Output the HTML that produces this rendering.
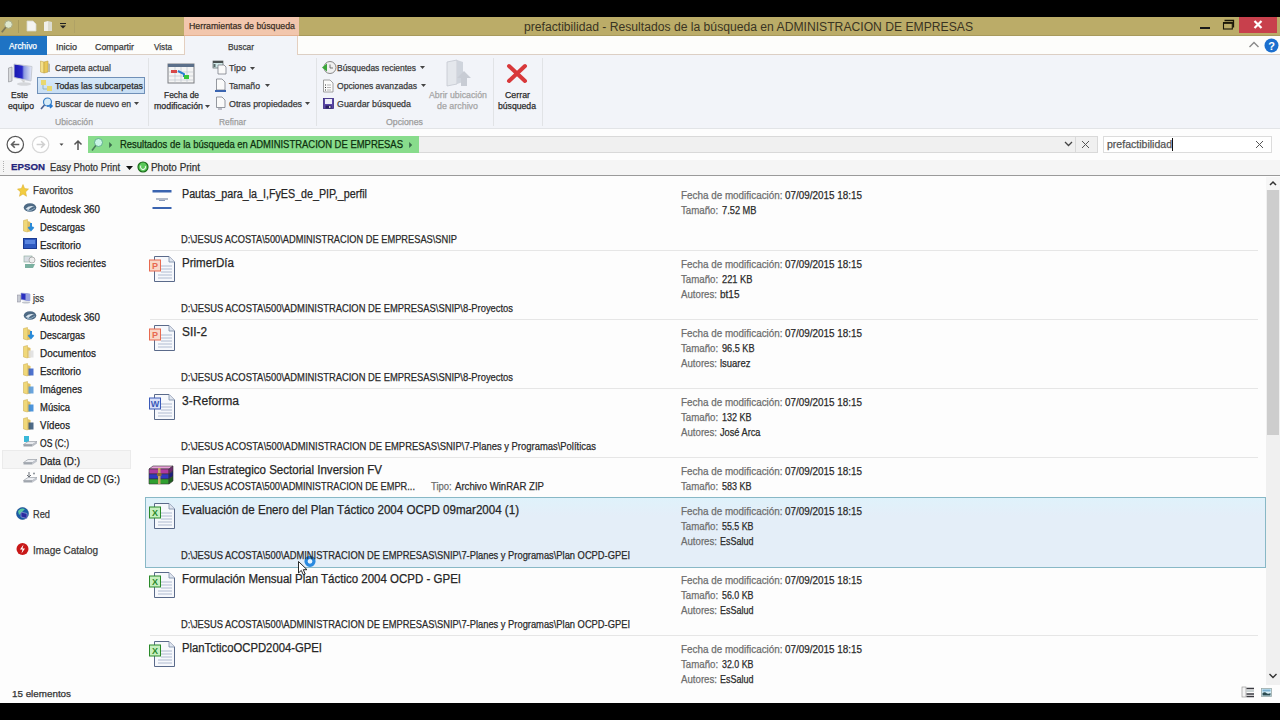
<!DOCTYPE html><html><head><meta charset="utf-8"><style>html,body{margin:0;padding:0;}body{width:1280px;height:720px;overflow:hidden;position:relative;background:#000;font-family:"Liberation Sans",sans-serif;}.t{position:absolute;white-space:nowrap;line-height:1;transform-origin:0 0;-webkit-text-stroke:0.25px currentColor;}svg{overflow:visible}</style></head><body><div style="position:absolute;left:0px;top:0px;width:1280px;height:17px;background:#000"></div><div style="position:absolute;left:0px;top:703px;width:1280px;height:17px;background:#000"></div><div style="position:absolute;left:0px;top:17px;width:1280px;height:19px;background:#bbac68"></div><div style="position:absolute;left:0px;top:35px;width:1280px;height:1px;background:#a89a5c"></div><div style="position:absolute;left:184px;top:17px;width:115px;height:19px;background:#f2c6ad"></div><div style="position:absolute;left:184px;top:35px;width:115px;height:1px;background:#e4b090"></div><div style="position:absolute;left:1200px;top:27px;width:10px;height:2px;background:#1a1a1a"></div><svg style="position:absolute;left:1222px;top:19px" width="13" height="12" viewBox="0 0 13 12"><path d="M2.5 1.5 H11.5 V8.5" fill="none" stroke="#1a1608" stroke-width="1.3"/><rect x="1.5" y="3.8" width="8.8" height="6.2" fill="none" stroke="#1a1608" stroke-width="1.1"/><rect x="1" y="3" width="9.8" height="1.8" fill="#1a1608"/></svg><div style="position:absolute;left:1239px;top:17px;width:38px;height:16px;background:#c8404c"></div><svg style="position:absolute;left:1251px;top:19px" width="14" height="11" viewBox="0 0 14 11"><path d="M3.5 2 L10.5 9 M10.5 2 L3.5 9" stroke="#fff" stroke-width="2.2"/></svg><svg style="position:absolute;left:0px;top:19px" width="17" height="16" viewBox="0 0 17 16"><circle cx="8.5" cy="5.5" r="3.8" fill="#dfe8cc" stroke="#a8ac88" stroke-width="1"/><path d="M5.8 8.3 L1.8 13.2" stroke="#7a7658" stroke-width="1.8"/></svg><div style="position:absolute;left:18px;top:20px;width:1px;height:13px;background:#a89a5c"></div><svg style="position:absolute;left:26px;top:20px" width="12" height="12" viewBox="0 0 12 12"><path d="M1 1 H7 L10 4 V11 H1 Z" fill="#f4f4f0" stroke="#d8d8cc" stroke-width="0.8"/></svg><svg style="position:absolute;left:43px;top:20px" width="11" height="12" viewBox="0 0 11 12"><path d="M1 2 L5 1 V11 L1 11 Z" fill="#f0f0ea"/><path d="M5 1 L9 2 V11 H5 Z" fill="#dcdcd0"/></svg><svg style="position:absolute;left:59px;top:23px" width="8" height="6" viewBox="0 0 8 6"><rect x="1" y="0" width="6" height="1" fill="#222"/><path d="M1 2.5 H7 L4 5.5 Z" fill="#222"/></svg><div style="position:absolute;left:74px;top:20px;width:1px;height:13px;background:#b0a266"></div><div style="position:absolute;left:0px;top:36px;width:1280px;height:19px;background:#fdfdfb"></div><div style="position:absolute;left:0px;top:54px;width:1280px;height:1px;background:#dccfc4"></div><div style="position:absolute;left:0px;top:36px;width:47px;height:19px;background:#1e73c4"></div><div style="position:absolute;left:184px;top:36px;width:114px;height:20px;background:#f2f4f9;border-left:1px solid #e4cfbf;border-right:1px solid #e4cfbf;box-sizing:border-box"></div><svg style="position:absolute;left:1248px;top:40px" width="12" height="9" viewBox="0 0 12 9"><path d="M1.5 7 L6 2.5 L10.5 7" fill="none" stroke="#8a8a8a" stroke-width="1.4"/></svg><svg style="position:absolute;left:1264px;top:38px" width="15" height="15" viewBox="0 0 15 15"><circle cx="7.5" cy="7.5" r="7" fill="#1c6fce"/><text x="7.5" y="12" font-family="Liberation Sans" font-weight="bold" font-size="11" fill="#fff" text-anchor="middle">?</text></svg><div style="position:absolute;left:0px;top:55px;width:1280px;height:74px;background:#f2f4f9"></div><div style="position:absolute;left:0px;top:128px;width:1280px;height:1px;background:#e2e4e7"></div><div style="position:absolute;left:148px;top:58px;width:1px;height:68px;background:#e1e3e6"></div><div style="position:absolute;left:316px;top:58px;width:1px;height:68px;background:#e1e3e6"></div><div style="position:absolute;left:493px;top:58px;width:1px;height:68px;background:#e1e3e6"></div><div style="position:absolute;left:542px;top:58px;width:1px;height:68px;background:#e1e3e6"></div><svg style="position:absolute;left:7px;top:62px" width="26" height="24" viewBox="0 0 26 24"><defs><linearGradient id="scr" x1="0" x2="1"><stop offset="0" stop-color="#1818b0"/><stop offset="0.45" stop-color="#2828c8"/><stop offset="0.55" stop-color="#8a98e0"/><stop offset="1" stop-color="#e8ecf8"/></linearGradient></defs><path d="M1.5 6 L5 5 V19 L1.5 20 Z" fill="#d8dadc" stroke="#8a8c90" stroke-width="0.6"/><path d="M7 2 L25 4.5 L24 19 L7 15.5 Z" fill="url(#scr)" stroke="#c8ccd4" stroke-width="1"/><path d="M14 18 L18 18.5 L17 21 Z" fill="#ccc"/><ellipse cx="17" cy="22" rx="7" ry="1.8" fill="#d4d6da"/></svg><svg style="position:absolute;left:39px;top:60px" width="14" height="14" viewBox="0 0 14 14"><path d="M1.5 1 L5 2 V13 L1.5 12 Z" fill="#f4e08a" stroke="#c8a848" stroke-width="0.6"/><path d="M5 2 L9 1 V12 L5 13 Z" fill="#e8c858" stroke="#c0a040" stroke-width="0.6"/><path d="M9 3 L11 4 V12 L9 12 Z" fill="#b8b8a8"/></svg><div style="position:absolute;left:37px;top:77px;width:108px;height:17px;background:linear-gradient(#d6e8f8,#c8def4);border:1px solid #7090b8;box-sizing:border-box"></div><svg style="position:absolute;left:40px;top:79px" width="14" height="14" viewBox="0 0 14 14"><rect x="1" y="1" width="5" height="5" fill="#e8d870"/><rect x="7" y="7" width="5" height="5" fill="#e8d870"/><path d="M3 6 V10 H7" stroke="#8aa" fill="none" stroke-width="0.8"/></svg><svg style="position:absolute;left:40px;top:97px" width="14" height="13" viewBox="0 0 14 13"><circle cx="7.5" cy="5" r="4" fill="#d8ecf8" stroke="#3a80c8" stroke-width="1.2"/><path d="M4.5 8 L1 12" stroke="#4a6090" stroke-width="1.6"/><path d="M7 9 H12 M10 7 L12 9 L10 11" stroke="#2a7ad0" stroke-width="1.6" fill="none"/></svg><svg style="position:absolute;left:134px;top:102px" width="6" height="4" viewBox="0 0 6 4"><path d="M0 0 H5 L2.5 3 Z" fill="#444"/></svg><svg style="position:absolute;left:167px;top:63px" width="28" height="21" viewBox="0 0 28 21"><rect x="1" y="1" width="26" height="19" fill="#f4f4f4" stroke="#7a7d82" stroke-width="1"/><rect x="1" y="1" width="26" height="3" fill="#5b6f8a"/><path d="M2 9 H26 M2 13 H26 M2 17 H26 M8 4 V20 M14 4 V20 M20 4 V20" stroke="#b8bfca" stroke-width="0.6"/><rect x="4" y="7" width="6" height="3" fill="#d84848"/><path d="M11 8 L17 11 L17 14" stroke="#2a80d0" stroke-width="2" fill="none"/><rect x="17" y="12" width="5" height="4" fill="#38c838"/></svg><svg style="position:absolute;left:205px;top:105px" width="6" height="4" viewBox="0 0 6 4"><path d="M0 0 H5 L2.5 3 Z" fill="#444"/></svg><svg style="position:absolute;left:212px;top:60px" width="16" height="15" viewBox="0 0 16 15"><rect x="1" y="1" width="10" height="7" fill="#cfe8e8" stroke="#5a6060" stroke-width="0.7"/><rect x="1" y="1" width="10" height="2" fill="#4a5050"/><rect x="1.5" y="4" width="2" height="3" fill="#5a6a6a"/><path d="M6 5 H12 L14 7 V14 H6 Z" fill="#fafafa" stroke="#6a6e78" stroke-width="0.7"/></svg><svg style="position:absolute;left:250px;top:67px" width="6" height="4" viewBox="0 0 6 4"><path d="M0 0 H5 L2.5 3 Z" fill="#444"/></svg><svg style="position:absolute;left:214px;top:78px" width="13" height="15" viewBox="0 0 13 15"><path d="M2.5 1 H8 L11 4 V12 H2.5 Z" fill="#fafafa" stroke="#6a6e78" stroke-width="0.7"/><rect x="1" y="12" width="11" height="2" fill="#3a64b0"/></svg><svg style="position:absolute;left:265px;top:84px" width="6" height="4" viewBox="0 0 6 4"><path d="M0 0 H5 L2.5 3 Z" fill="#444"/></svg><svg style="position:absolute;left:215px;top:96px" width="11" height="15" viewBox="0 0 11 15"><path d="M1.5 1 H7 L10 4 V11.5 H1.5 Z" fill="#fafafa" stroke="#6a6e78" stroke-width="0.7"/><rect x="3" y="12.5" width="4" height="1" fill="#889"/></svg><svg style="position:absolute;left:305px;top:102px" width="6" height="4" viewBox="0 0 6 4"><path d="M0 0 H5 L2.5 3 Z" fill="#444"/></svg><svg style="position:absolute;left:321px;top:60px" width="16" height="15" viewBox="0 0 16 15"><circle cx="9" cy="7.5" r="6" fill="#f0f0f0" stroke="#888" stroke-width="1"/><path d="M1 7.5 L6 3.5 V11.5 Z" fill="#3aa63a"/><path d="M9 4.5 V8 H12" stroke="#555" stroke-width="0.8" fill="none"/></svg><svg style="position:absolute;left:420px;top:66px" width="6" height="4" viewBox="0 0 6 4"><path d="M0 0 H5 L2.5 3 Z" fill="#444"/></svg><svg style="position:absolute;left:322px;top:79px" width="13" height="15" viewBox="0 0 13 15"><path d="M1.5 1 H8 L11 4 V13 H1.5 Z" fill="#fbfbfb" stroke="#8a8a8a" stroke-width="0.8"/><path d="M3 6 H4 M3 8.5 H4 M3 11 H4" stroke="#333" stroke-width="1"/><path d="M5 6 H9 M5 8.5 H9 M5 11 H9" stroke="#999" stroke-width="0.7"/></svg><svg style="position:absolute;left:421px;top:84px" width="6" height="4" viewBox="0 0 6 4"><path d="M0 0 H5 L2.5 3 Z" fill="#444"/></svg><svg style="position:absolute;left:322px;top:97px" width="13" height="13" viewBox="0 0 13 13"><rect x="1.5" y="1.5" width="10" height="10" fill="#5a46a8" stroke="#3a2a80" stroke-width="0.8"/><rect x="3" y="2" width="7" height="5" fill="#eeeef8"/><rect x="3.5" y="8.5" width="6" height="3" fill="#2a2060"/><rect x="7" y="9" width="1.5" height="2" fill="#ccc"/></svg><svg style="position:absolute;left:444px;top:59px" width="30" height="30" viewBox="0 0 30 30"><path d="M3 3 L13 1 V25 L3 27 Z" fill="#e4e7ec" stroke="#c4c8d0" stroke-width="0.8"/><path d="M13 1 L19 3 V23 L13 25 Z" fill="#cfd4dc"/><path d="M20 12 L27 19 H23 V27 H17 V19 H13 Z" fill="#c8ccd4"/></svg><svg style="position:absolute;left:505px;top:62px" width="24" height="23" viewBox="0 0 24 23"><path d="M4 4 L20 19 M20 4 L4 19" stroke="#d8383a" stroke-width="4" stroke-linecap="round"/></svg><div style="position:absolute;left:0px;top:129px;width:1280px;height:31px;background:#fdfdfd"></div><svg style="position:absolute;left:5px;top:135px" width="20" height="20" viewBox="0 0 20 20"><circle cx="10.3" cy="9.5" r="8.2" fill="#fff" stroke="#555" stroke-width="1.2"/><path d="M14.3 9.5 H6.5 M9.8 6.2 L6.5 9.5 L9.8 12.8" stroke="#606060" stroke-width="1.6" fill="none"/></svg><svg style="position:absolute;left:31px;top:135px" width="20" height="20" viewBox="0 0 20 20"><circle cx="9.6" cy="9.5" r="8.2" fill="#fff" stroke="#d8d8d8" stroke-width="1.2"/><path d="M5.6 9.5 H13.4 M10.1 6.2 L13.4 9.5 L10.1 12.8" stroke="#d0d0d0" stroke-width="1.6" fill="none"/></svg><svg style="position:absolute;left:58.5px;top:143px" width="6" height="4" viewBox="0 0 6 4"><path d="M0.5 0.5 H4.5 L2.5 2.8 Z" fill="#444"/></svg><svg style="position:absolute;left:73px;top:139px" width="10" height="12" viewBox="0 0 10 12"><path d="M5 11 V2 M1.5 5.5 L5 2 L8.5 5.5" stroke="#555" stroke-width="1.5" fill="none"/></svg><div style="position:absolute;left:88px;top:136px;width:1010px;height:17px;background:#f0f0f0;border:1px solid #d9d9d9;box-sizing:border-box"></div><div style="position:absolute;left:88px;top:136px;width:331px;height:17px;background:#88dc8c"></div><svg style="position:absolute;left:90px;top:137px" width="14" height="15" viewBox="0 0 14 15"><circle cx="8.5" cy="5.5" r="4" fill="#c8f4e4" stroke="#5aa88a" stroke-width="0.9"/><path d="M5.8 8.5 L2 13.5" stroke="#4a7a5a" stroke-width="1.5"/></svg><svg style="position:absolute;left:108px;top:141px" width="5" height="8" viewBox="0 0 5 8"><path d="M1.2 1 L4.2 4 L1.2 7 Z" fill="#3a6a4a"/></svg><svg style="position:absolute;left:408px;top:141px" width="5" height="8" viewBox="0 0 5 8"><path d="M1.2 1 L4.2 4 L1.2 7 Z" fill="#3a6a4a"/></svg><svg style="position:absolute;left:1064px;top:141px" width="9" height="6" viewBox="0 0 9 6"><path d="M1 1 L4.5 4.5 L8 1" fill="none" stroke="#444" stroke-width="1.3"/></svg><div style="position:absolute;left:1075px;top:137px;width:1px;height:15px;background:#d9d9d9"></div><svg style="position:absolute;left:1081px;top:140px" width="9" height="9" viewBox="0 0 9 9"><path d="M1 1 L8 8 M8 1 L1 8" stroke="#555" stroke-width="1"/></svg><div style="position:absolute;left:1103px;top:136px;width:169px;height:17px;background:#fff;border:1px solid #dcdcdc;box-sizing:border-box"></div><div style="position:absolute;left:1172px;top:138px;width:1px;height:13px;background:#111"></div><svg style="position:absolute;left:1255px;top:140px" width="9" height="9" viewBox="0 0 9 9"><path d="M1 1 L8 8 M8 1 L1 8" stroke="#555" stroke-width="1"/></svg><div style="position:absolute;left:0px;top:160px;width:1280px;height:16px;background:#f5f5f5"></div><div style="position:absolute;left:0px;top:175px;width:1280px;height:1px;background:#9a9a9a"></div><div style="position:absolute;left:3px;top:161px;width:1px;height:1px;background:#b0b0b0"></div><div style="position:absolute;left:3px;top:163px;width:1px;height:1px;background:#b0b0b0"></div><div style="position:absolute;left:3px;top:165px;width:1px;height:1px;background:#b0b0b0"></div><div style="position:absolute;left:3px;top:167px;width:1px;height:1px;background:#b0b0b0"></div><div style="position:absolute;left:3px;top:169px;width:1px;height:1px;background:#b0b0b0"></div><div style="position:absolute;left:3px;top:171px;width:1px;height:1px;background:#b0b0b0"></div><svg style="position:absolute;left:126px;top:166px" width="8" height="5" viewBox="0 0 8 5"><path d="M0 0 H7 L3.5 4 Z" fill="#111"/></svg><svg style="position:absolute;left:137px;top:161px" width="12" height="12" viewBox="0 0 12 12"><circle cx="6" cy="6" r="5" fill="#5ac85a" stroke="#1a6a1a" stroke-width="1.2"/><path d="M4 4.5 A2.5 2.5 0 1 0 8.3 5" fill="none" stroke="#e8f8e8" stroke-width="1.1"/></svg><div style="position:absolute;left:0px;top:176px;width:1280px;height:527px;background:#fdfdfd"></div><div style="position:absolute;left:0px;top:685px;width:1280px;height:18px;background:#fdfdfd"></div><div style="position:absolute;left:2px;top:450px;width:129px;height:19px;background:#f5f5f5;border:1px solid #ebebeb;box-sizing:border-box"></div><svg style="position:absolute;left:17px;top:184.25px" width="12" height="13" viewBox="0 0 12 13"><path d="M6 0.5 L7.6 4.6 L11.5 5 L8.6 7.9 L9.5 12.3 L6 10 L2.5 12.3 L3.4 7.9 L0.5 5 L4.4 4.6 Z" fill="#f2cc40" stroke="#d8a820" stroke-width="0.5"/></svg><svg style="position:absolute;left:23px;top:201.5px" width="14" height="11" viewBox="0 0 14 11"><ellipse cx="7" cy="5.5" rx="6.3" ry="4.3" fill="#4e6a84"/><path d="M2.5 7 Q6 2.5 11.5 4.5 Q8 4.5 5.5 8 Z" fill="#d8e4ee"/><path d="M4 8.5 Q8 9.5 12 6" stroke="#8aa8c0" stroke-width="1" fill="none"/></svg><svg style="position:absolute;left:23px;top:218.5px" width="14" height="14" viewBox="0 0 14 14"><path d="M0.5 1.5 L4.5 0.5 V13 L0.5 12 Z" fill="#f0d878" stroke="#c8a848" stroke-width="0.5"/><path d="M4.5 2 L7.5 3 V12.5 L4.5 13 Z" fill="#e0c060"/><path d="M8 4 V10 M5.5 8 L8 11 L10.5 8" stroke="#2a8ad8" stroke-width="2" fill="none"/></svg><svg style="position:absolute;left:23px;top:237.5px" width="14" height="12" viewBox="0 0 14 12"><rect x="0.5" y="0.5" width="13" height="10" fill="#2e5ac0" stroke="#1a3a90" stroke-width="1"/><rect x="2" y="2" width="10" height="4" fill="#5a86e0"/></svg><svg style="position:absolute;left:23px;top:254.5px" width="14" height="14" viewBox="0 0 14 14"><rect x="1" y="1" width="8" height="6" fill="#d8dde4" stroke="#8a9" stroke-width="0.6"/><path d="M2 9 H12 L10 13 H2 Z" fill="#7ab0a0"/><circle cx="9" cy="5" r="3" fill="#eee" stroke="#888" stroke-width="0.6"/></svg><svg style="position:absolute;left:17px;top:292.25px" width="14" height="12" viewBox="0 0 14 12"><path d="M4 1 L13 2 V9 L4 7.5 Z" fill="#2a30c0" stroke="#a0a8d0" stroke-width="0.6"/><path d="M8.5 1.5 L13 2 V9 L8.5 8.3 Z" fill="#9aa4e0"/><rect x="0.5" y="3" width="3" height="7" fill="#c8ccd4" stroke="#889" stroke-width="0.5"/><ellipse cx="9" cy="10.5" rx="4" ry="1" fill="#c0c4cc"/></svg><svg style="position:absolute;left:23px;top:309.5px" width="14" height="11" viewBox="0 0 14 11"><ellipse cx="7" cy="5.5" rx="6.3" ry="4.3" fill="#4e6a84"/><path d="M2.5 7 Q6 2.5 11.5 4.5 Q8 4.5 5.5 8 Z" fill="#d8e4ee"/><path d="M4 8.5 Q8 9.5 12 6" stroke="#8aa8c0" stroke-width="1" fill="none"/></svg><svg style="position:absolute;left:23px;top:326.5px" width="14" height="14" viewBox="0 0 14 14"><path d="M0.5 1.5 L4.5 0.5 V13 L0.5 12 Z" fill="#f0d878" stroke="#c8a848" stroke-width="0.5"/><path d="M4.5 2 L7.5 3 V12.5 L4.5 13 Z" fill="#e0c060"/><path d="M8 4 V10 M5.5 8 L8 11 L10.5 8" stroke="#2a8ad8" stroke-width="2" fill="none"/></svg><svg style="position:absolute;left:23px;top:344.5px" width="14" height="14" viewBox="0 0 14 14"><path d="M0.5 1.5 L4.5 0.5 V13 L0.5 12 Z" fill="#f0d878" stroke="#c8a848" stroke-width="0.5"/><path d="M4.5 2 L7.5 3 V12.5 L4.5 13 Z" fill="#e0c060"/><rect x="5.5" y="5.5" width="5" height="7" fill="#e0e0e0" opacity="0.9"/></svg><svg style="position:absolute;left:23px;top:362.5px" width="14" height="14" viewBox="0 0 14 14"><path d="M0.5 1.5 L4.5 0.5 V13 L0.5 12 Z" fill="#f0d878" stroke="#c8a848" stroke-width="0.5"/><path d="M4.5 2 L7.5 3 V12.5 L4.5 13 Z" fill="#e0c060"/><rect x="5.5" y="5.5" width="5" height="7" fill="#3a62c8" opacity="0.9"/></svg><svg style="position:absolute;left:23px;top:380.5px" width="14" height="14" viewBox="0 0 14 14"><path d="M0.5 1.5 L4.5 0.5 V13 L0.5 12 Z" fill="#f0d878" stroke="#c8a848" stroke-width="0.5"/><path d="M4.5 2 L7.5 3 V12.5 L4.5 13 Z" fill="#e0c060"/><rect x="5.5" y="5.5" width="5" height="7" fill="#5a9ad8" opacity="0.9"/></svg><svg style="position:absolute;left:23px;top:398.5px" width="14" height="14" viewBox="0 0 14 14"><path d="M0.5 1.5 L4.5 0.5 V13 L0.5 12 Z" fill="#f0d878" stroke="#c8a848" stroke-width="0.5"/><path d="M4.5 2 L7.5 3 V12.5 L4.5 13 Z" fill="#e0c060"/><rect x="5.5" y="5.5" width="5" height="7" fill="#3a8ad8" opacity="0.9"/></svg><svg style="position:absolute;left:23px;top:416.5px" width="14" height="14" viewBox="0 0 14 14"><path d="M0.5 1.5 L4.5 0.5 V13 L0.5 12 Z" fill="#f0d878" stroke="#c8a848" stroke-width="0.5"/><path d="M4.5 2 L7.5 3 V12.5 L4.5 13 Z" fill="#e0c060"/><rect x="5.5" y="5.5" width="5" height="7" fill="#3a5a7a" opacity="0.9"/></svg><svg style="position:absolute;left:23px;top:434.5px" width="15" height="14" viewBox="0 0 15 14"><rect x="1" y="1" width="5" height="6" fill="#3ab8d8"/><path d="M0.5 9.5 L5 6.5 H14 L9.5 9.5 Z" fill="#e8eaee" stroke="#8a9098" stroke-width="0.6"/><path d="M0.5 9.5 H9.5 V11.5 H0.5 Z" fill="#9aa0a8"/><path d="M9.5 9.5 L14 6.5 V8.5 L9.5 11.5 Z" fill="#b8bcc4"/></svg><svg style="position:absolute;left:23px;top:452.5px" width="15" height="14" viewBox="0 0 15 14"><path d="M0.5 9.5 L5 6.5 H14 L9.5 9.5 Z" fill="#eceef2" stroke="#8a9098" stroke-width="0.6"/><path d="M0.5 9.5 H9.5 V11.5 H0.5 Z" fill="#a0a6ae"/><path d="M9.5 9.5 L14 6.5 V8.5 L9.5 11.5 Z" fill="#c0c4cc"/></svg><svg style="position:absolute;left:23px;top:470.5px" width="15" height="14" viewBox="0 0 15 14"><path d="M6 1 V6 M4 4 L6 6 L8 4" stroke="#6a7078" stroke-width="1" fill="none"/><circle cx="11" cy="2.5" r="1" fill="#8a9098"/><path d="M0.5 9.5 L5 6.5 H14 L9.5 9.5 Z" fill="#eceef2" stroke="#8a9098" stroke-width="0.6"/><path d="M0.5 9.5 H9.5 V11.5 H0.5 Z" fill="#a0a6ae"/><path d="M9.5 9.5 L14 6.5 V8.5 L9.5 11.5 Z" fill="#c0c4cc"/></svg><svg style="position:absolute;left:16px;top:506.5px" width="15" height="14" viewBox="0 0 15 14"><circle cx="6.5" cy="6.5" r="6" fill="#1a5aa8" stroke="#1a4a88" stroke-width="0.6"/><path d="M2 4 Q5 0.5 9 2 Q6 5 3 8 Z" fill="#5ac8a0"/><path d="M5 5 L11 6.5 V11.5 L5 10 Z" fill="#2a2aa0" stroke="#a8b0e0" stroke-width="0.6"/></svg><svg style="position:absolute;left:16px;top:541.5px" width="14" height="14" viewBox="0 0 14 14"><circle cx="6.5" cy="7" r="6" fill="#c81818"/><path d="M7.5 2.5 L4 7.5 H6.5 L5.5 11.5 L9 6.5 H6.5 Z" fill="#fff"/></svg><svg style="position:absolute;left:147px;top:185px" width="28" height="28" viewBox="0 0 28 28"><rect x="5.5" y="5" width="19" height="2.5" fill="#3a64b0"/><rect x="9" y="13.5" width="12" height="1" fill="#6a7a98"/><rect x="12" y="15" width="6" height="1" fill="#8a9ab8"/><rect x="5.5" y="22" width="19" height="2" fill="#3a64b0"/></svg><div style="position:absolute;left:150px;top:250px;width:1108px;height:1px;background:#e6e6e6"></div><svg style="position:absolute;left:147px;top:254px" width="30" height="32" viewBox="0 0 30 32"><path d="M7.5 2.5 H22 L27.5 8 V27.5 H7.5 Z" fill="#f6f8fc" stroke="#5a6a8a" stroke-width="1"/><path d="M22 2.5 V8 H27.5" fill="#e0e6f0" stroke="#7a8aa6" stroke-width="0.8"/><path d="M14 12 H25 M14 15 H25 M14 18 H25 M11 21 H25 M11 24 H25" stroke="#a8b4cc" stroke-width="0.9"/><rect x="2.5" y="6" width="11" height="11" fill="#f8d8c8" stroke="#e86a50" stroke-width="1"/><text x="8" y="14.5" font-family="Liberation Sans" font-weight="bold" font-size="9" fill="#e86a50" text-anchor="middle">P</text></svg><div style="position:absolute;left:150px;top:319px;width:1108px;height:1px;background:#e6e6e6"></div><svg style="position:absolute;left:147px;top:323px" width="30" height="32" viewBox="0 0 30 32"><path d="M7.5 2.5 H22 L27.5 8 V27.5 H7.5 Z" fill="#f6f8fc" stroke="#5a6a8a" stroke-width="1"/><path d="M22 2.5 V8 H27.5" fill="#e0e6f0" stroke="#7a8aa6" stroke-width="0.8"/><path d="M14 12 H25 M14 15 H25 M14 18 H25 M11 21 H25 M11 24 H25" stroke="#a8b4cc" stroke-width="0.9"/><rect x="2.5" y="6" width="11" height="11" fill="#f8d8c8" stroke="#e86a50" stroke-width="1"/><text x="8" y="14.5" font-family="Liberation Sans" font-weight="bold" font-size="9" fill="#e86a50" text-anchor="middle">P</text></svg><div style="position:absolute;left:150px;top:388px;width:1108px;height:1px;background:#e6e6e6"></div><svg style="position:absolute;left:147px;top:392px" width="30" height="32" viewBox="0 0 30 32"><path d="M7.5 2.5 H22 L27.5 8 V27.5 H7.5 Z" fill="#f6f8fc" stroke="#5a6a8a" stroke-width="1"/><path d="M22 2.5 V8 H27.5" fill="#e0e6f0" stroke="#7a8aa6" stroke-width="0.8"/><path d="M14 12 H25 M14 15 H25 M14 18 H25 M11 21 H25 M11 24 H25" stroke="#a8b4cc" stroke-width="0.9"/><rect x="2.5" y="6" width="11" height="11" fill="#d8e0f8" stroke="#3a5ab8" stroke-width="1"/><text x="8" y="14.5" font-family="Liberation Sans" font-weight="bold" font-size="9" fill="#3a5ab8" text-anchor="middle">W</text></svg><div style="position:absolute;left:150px;top:457px;width:1108px;height:1px;background:#e6e6e6"></div><svg style="position:absolute;left:147px;top:465px" width="28" height="26" viewBox="0 0 28 26"><path d="M2 4 L6 1 H26 L22 4 Z" fill="#e8a0d8" stroke="#333" stroke-width="0.6"/><path d="M2 4 H22 V9 H2 Z" fill="#b03aa0" stroke="#333" stroke-width="0.6"/><path d="M22 4 L26 1 V6 L22 9 Z" fill="#702a70" stroke="#333" stroke-width="0.6"/><path d="M2 9 H22 V14 H2 Z" fill="#3038c0" stroke="#333" stroke-width="0.6"/><path d="M22 9 L26 6 V11 L22 14 Z" fill="#202080" stroke="#333" stroke-width="0.6"/><path d="M2 14 H22 V19 H2 Z" fill="#30a030" stroke="#333" stroke-width="0.6"/><path d="M22 14 L26 11 V16 L22 19 Z" fill="#206020" stroke="#333" stroke-width="0.6"/><rect x="11" y="3" width="2.5" height="16" fill="#c8a868"/><rect x="10" y="8" width="4.5" height="3" fill="#8a6a38"/></svg><div style="position:absolute;left:145px;top:497px;width:1121px;height:71px;background:linear-gradient(#dff2fb,#e4eef8 25%,#e4eef8);border:1px solid #88b8c6;box-sizing:border-box"></div><svg style="position:absolute;left:147px;top:501px" width="30" height="32" viewBox="0 0 30 32"><path d="M7.5 2.5 H22 L27.5 8 V27.5 H7.5 Z" fill="#f6f8fc" stroke="#5a6a8a" stroke-width="1"/><path d="M22 2.5 V8 H27.5" fill="#e0e6f0" stroke="#7a8aa6" stroke-width="0.8"/><path d="M14 12 H25 M14 15 H25 M14 18 H25 M11 21 H25 M11 24 H25" stroke="#a8b4cc" stroke-width="0.9"/><rect x="2.5" y="6" width="11" height="11" fill="#c8f0c0" stroke="#2a8a2a" stroke-width="1"/><text x="8" y="14.5" font-family="Liberation Sans" font-weight="bold" font-size="9" fill="#2a8a2a" text-anchor="middle">X</text></svg><svg style="position:absolute;left:147px;top:570px" width="30" height="32" viewBox="0 0 30 32"><path d="M7.5 2.5 H22 L27.5 8 V27.5 H7.5 Z" fill="#f6f8fc" stroke="#5a6a8a" stroke-width="1"/><path d="M22 2.5 V8 H27.5" fill="#e0e6f0" stroke="#7a8aa6" stroke-width="0.8"/><path d="M14 12 H25 M14 15 H25 M14 18 H25 M11 21 H25 M11 24 H25" stroke="#a8b4cc" stroke-width="0.9"/><rect x="2.5" y="6" width="11" height="11" fill="#c8f0c0" stroke="#2a8a2a" stroke-width="1"/><text x="8" y="14.5" font-family="Liberation Sans" font-weight="bold" font-size="9" fill="#2a8a2a" text-anchor="middle">X</text></svg><div style="position:absolute;left:150px;top:635px;width:1108px;height:1px;background:#e6e6e6"></div><svg style="position:absolute;left:147px;top:639px" width="30" height="32" viewBox="0 0 30 32"><path d="M7.5 2.5 H22 L27.5 8 V27.5 H7.5 Z" fill="#f6f8fc" stroke="#5a6a8a" stroke-width="1"/><path d="M22 2.5 V8 H27.5" fill="#e0e6f0" stroke="#7a8aa6" stroke-width="0.8"/><path d="M14 12 H25 M14 15 H25 M14 18 H25 M11 21 H25 M11 24 H25" stroke="#a8b4cc" stroke-width="0.9"/><rect x="2.5" y="6" width="11" height="11" fill="#c8f0c0" stroke="#2a8a2a" stroke-width="1"/><text x="8" y="14.5" font-family="Liberation Sans" font-weight="bold" font-size="9" fill="#2a8a2a" text-anchor="middle">X</text></svg><div style="position:absolute;left:150px;top:635px;width:1108px;height:1px;background:#e6e6e6"></div><div style="position:absolute;left:1266px;top:177px;width:14px;height:508px;background:#f0f0f0"></div><div style="position:absolute;left:1266px;top:177px;width:14px;height:13px;background:#f6f6f6"></div><svg style="position:absolute;left:1268px;top:179px" width="10" height="8" viewBox="0 0 10 8"><path d="M2 6 L5 3 L8 6" fill="none" stroke="#333" stroke-width="1.5"/></svg><div style="position:absolute;left:1267px;top:190px;width:12px;height:245px;background:#cdcdcd"></div><svg style="position:absolute;left:1268px;top:672px" width="10" height="8" viewBox="0 0 10 8"><path d="M1.5 2 L5 5.5 L8.5 2" fill="none" stroke="#333" stroke-width="1.4"/></svg><svg style="position:absolute;left:1241px;top:686px" width="14" height="12" viewBox="0 0 14 12"><rect x="1" y="1" width="4" height="10" fill="#f4f4f4" stroke="#9a9a9a" stroke-width="0.7"/><path d="M5.5 2.5 H13 M5.5 8 H13 M5.5 10.5 H13" stroke="#3a3a40" stroke-width="1.3"/><path d="M5.5 5 H13" stroke="#9aa" stroke-width="1"/></svg><svg style="position:absolute;left:1261px;top:688px" width="11" height="9" viewBox="0 0 11 9"><rect x="0.5" y="0.5" width="10" height="8" fill="#d8f0f8" stroke="#9aa8a8" stroke-width="0.8"/><path d="M1.5 7.5 L1.5 5 Q4 3.5 6 5.5 Q8 6 9.5 5 V7.5 Z" fill="#2a4a50"/><rect x="1.5" y="1.5" width="8" height="2" fill="#7ab0d0"/></svg><svg style="position:absolute;left:297px;top:560px" width="20" height="18" viewBox="0 0 20 18"><path d="M1.5 1.5 V13 L4.3 10.4 L6.3 14.8 L8.2 14 L6.3 9.7 H10 Z" fill="#fff" stroke="#111" stroke-width="0.9"/><circle cx="13" cy="1.3" r="4" fill="#e8f4ff" stroke="#2a8ae0" stroke-width="3.2"/></svg><div class="t" style="left:189px;top:20.71px;font-size:9.5px;color:#3a2f25;transform:scaleX(0.9249);">Herramientas de búsqueda</div><div class="t" style="left:524px;top:20.84px;font-size:12px;color:#3a3422;-webkit-text-stroke:0;transform:scaleX(1.0123);">prefactibilidad - Resultados de la búsqueda en ADMINISTRACION DE EMPRESAS</div><div class="t" style="left:9px;top:41.88px;font-size:9px;color:#ffffff;transform:scaleX(0.9328);">Archivo</div><div class="t" style="left:55.5px;top:43.38px;font-size:9px;color:#3b3b3b;transform:scaleX(0.9993);">Inicio</div><div class="t" style="left:95px;top:43.38px;font-size:9px;color:#3b3b3b;transform:scaleX(0.9870);">Compartir</div><div class="t" style="left:154px;top:43.38px;font-size:9px;color:#3b3b3b;transform:scaleX(0.9064);">Vista</div><div class="t" style="left:228px;top:43.38px;font-size:9px;color:#3b3b3b;transform:scaleX(0.9281);">Buscar</div><div class="t" style="left:55px;top:118.38px;font-size:9px;color:#9c9c9c;transform:scaleX(0.9613);">Ubicación</div><div class="t" style="left:219px;top:118.38px;font-size:9px;color:#9c9c9c;transform:scaleX(0.9305);">Refinar</div><div class="t" style="left:386px;top:118.38px;font-size:9px;color:#9c9c9c;transform:scaleX(0.9729);">Opciones</div><div class="t" style="left:11px;top:91.38px;font-size:9px;color:#2b2b2b;transform:scaleX(0.9436);">Este</div><div class="t" style="left:7.5px;top:102.38px;font-size:9px;color:#2b2b2b;transform:scaleX(0.9618);">equipo</div><div class="t" style="left:55px;top:64.13px;font-size:9px;color:#3b3b3b;transform:scaleX(0.9565);">Carpeta actual</div><div class="t" style="left:55px;top:82.13px;font-size:9px;color:#2b2b2b;transform:scaleX(0.9826);">Todas las subcarpetas</div><div class="t" style="left:55px;top:99.88px;font-size:9px;color:#3b3b3b;transform:scaleX(0.9493);">Buscar de nuevo en</div><div class="t" style="left:163.5px;top:91.38px;font-size:9px;color:#2b2b2b;transform:scaleX(0.9326);">Fecha de</div><div class="t" style="left:154px;top:102.38px;font-size:9px;color:#2b2b2b;transform:scaleX(0.9794);">modificación</div><div class="t" style="left:229px;top:64.13px;font-size:9px;color:#3b3b3b;transform:scaleX(0.9891);">Tipo</div><div class="t" style="left:229px;top:81.88px;font-size:9px;color:#3b3b3b;transform:scaleX(0.9678);">Tamaño</div><div class="t" style="left:229px;top:99.63px;font-size:9px;color:#3b3b3b;transform:scaleX(0.9859);">Otras propiedades</div><div class="t" style="left:337px;top:64.13px;font-size:9px;color:#3b3b3b;transform:scaleX(0.9398);">Búsquedas recientes</div><div class="t" style="left:337px;top:81.88px;font-size:9px;color:#3b3b3b;transform:scaleX(0.9517);">Opciones avanzadas</div><div class="t" style="left:337px;top:99.63px;font-size:9px;color:#3b3b3b;transform:scaleX(0.9858);">Guardar búsqueda</div><div class="t" style="left:429px;top:91.38px;font-size:9px;color:#a5a5a5;transform:scaleX(0.9743);">Abrir ubicación</div><div class="t" style="left:437px;top:102.38px;font-size:9px;color:#a5a5a5;transform:scaleX(0.9872);">de archivo</div><div class="t" style="left:505px;top:91.38px;font-size:9px;color:#2b2b2b;transform:scaleX(0.9798);">Cerrar</div><div class="t" style="left:498px;top:102.38px;font-size:9px;color:#2b2b2b;transform:scaleX(0.9609);">búsqueda</div><div class="t" style="left:120px;top:140.03px;font-size:10px;color:#0e300e;transform:scaleX(0.9464);">Resultados de la búsqueda en ADMINISTRACION DE EMPRESAS</div><div class="t" style="left:1107px;top:140.03px;font-size:10px;color:#555555;transform:scaleX(1.0532);">prefactibilidad</div><div class="t" style="left:11px;top:162.46px;font-size:9.5px;color:#23237a;font-weight:bold;transform:scaleX(1.0221);">EPSON</div><div class="t" style="left:50px;top:162.53px;font-size:10px;color:#333;transform:scaleX(0.9398);">Easy Photo Print</div><div class="t" style="left:151px;top:162.53px;font-size:10px;color:#333;transform:scaleX(0.9902);">Photo Print</div><div class="t" style="left:33px;top:184.86px;font-size:10.5px;color:#3a3a3a;transform:scaleX(0.9262);">Favoritos</div><div class="t" style="left:40px;top:203.61px;font-size:10.5px;color:#222222;transform:scaleX(0.9343);">Autodesk 360</div><div class="t" style="left:40px;top:221.61px;font-size:10.5px;color:#222222;transform:scaleX(0.8964);">Descargas</div><div class="t" style="left:40px;top:239.61px;font-size:10.5px;color:#222222;transform:scaleX(0.9368);">Escritorio</div><div class="t" style="left:40px;top:257.61px;font-size:10.5px;color:#222222;transform:scaleX(0.9269);">Sitios recientes</div><div class="t" style="left:33px;top:292.86px;font-size:10.5px;color:#3a3a3a;transform:scaleX(0.8564);">jss</div><div class="t" style="left:40px;top:311.61px;font-size:10.5px;color:#222222;transform:scaleX(0.9343);">Autodesk 360</div><div class="t" style="left:40px;top:329.61px;font-size:10.5px;color:#222222;transform:scaleX(0.8964);">Descargas</div><div class="t" style="left:40px;top:347.61px;font-size:10.5px;color:#222222;transform:scaleX(0.9499);">Documentos</div><div class="t" style="left:40px;top:365.61px;font-size:10.5px;color:#222222;transform:scaleX(0.9368);">Escritorio</div><div class="t" style="left:40px;top:383.61px;font-size:10.5px;color:#222222;transform:scaleX(0.9106);">Imágenes</div><div class="t" style="left:40px;top:401.61px;font-size:10.5px;color:#222222;transform:scaleX(0.9018);">Música</div><div class="t" style="left:40px;top:419.61px;font-size:10.5px;color:#222222;transform:scaleX(0.9173);">Vídeos</div><div class="t" style="left:40px;top:437.61px;font-size:10.5px;color:#222222;transform:scaleX(0.8147);">OS (C:)</div><div class="t" style="left:40px;top:455.61px;font-size:10.5px;color:#222222;transform:scaleX(0.9391);">Data (D:)</div><div class="t" style="left:40px;top:473.61px;font-size:10.5px;color:#222222;transform:scaleX(0.9200);">Unidad de CD (G:)</div><div class="t" style="left:33px;top:508.61px;font-size:10.5px;color:#3a3a3a;transform:scaleX(0.8824);">Red</div><div class="t" style="left:33px;top:544.61px;font-size:10.5px;color:#3a3a3a;transform:scaleX(0.9517);">Image Catalog</div><div class="t" style="left:181.7px;top:188.34px;font-size:12px;color:#262626;transform:scaleX(0.8926);">Pautas_para_la_I,FyES_de_PIP,_perfil</div><div class="t" style="left:181px;top:233.69px;font-size:11px;color:#2a2a2a;transform:scaleX(0.8429);">D:\JESUS ACOSTA\500\ADMINISTRACION DE EMPRESAS\SNIP</div><div class="t" style="left:681px;top:189.69px;font-size:11px;color:#6d6d6d;transform:scaleX(0.8972);">Fecha de modificación:</div><div class="t" style="left:785px;top:189.69px;font-size:11px;color:#2a2a2a;transform:scaleX(0.8991);">07/09/2015 18:15</div><div class="t" style="left:681px;top:205.19px;font-size:11px;color:#6d6d6d;transform:scaleX(0.8815);">Tamaño:</div><div class="t" style="left:721.5px;top:205.19px;font-size:11px;color:#2a2a2a;transform:scaleX(0.8421);">7.52 MB</div><div class="t" style="left:181.7px;top:257.34px;font-size:12px;color:#262626;transform:scaleX(0.9627);">PrimerDía</div><div class="t" style="left:181px;top:302.69px;font-size:11px;color:#2a2a2a;transform:scaleX(0.8531);">D:\JESUS ACOSTA\500\ADMINISTRACION DE EMPRESAS\SNIP\8-Proyectos</div><div class="t" style="left:681px;top:258.69px;font-size:11px;color:#6d6d6d;transform:scaleX(0.8972);">Fecha de modificación:</div><div class="t" style="left:785px;top:258.69px;font-size:11px;color:#2a2a2a;transform:scaleX(0.8991);">07/09/2015 18:15</div><div class="t" style="left:681px;top:274.19px;font-size:11px;color:#6d6d6d;transform:scaleX(0.8815);">Tamaño:</div><div class="t" style="left:721.5px;top:274.19px;font-size:11px;color:#2a2a2a;transform:scaleX(0.8450);">221 KB</div><div class="t" style="left:681px;top:289.19px;font-size:11px;color:#6d6d6d;transform:scaleX(0.8787);">Autores:</div><div class="t" style="left:719.5px;top:289.19px;font-size:11px;color:#2a2a2a;transform:scaleX(0.9103);">bt15</div><div class="t" style="left:181.7px;top:326.34px;font-size:12px;color:#262626;transform:scaleX(0.9864);">SII-2</div><div class="t" style="left:181px;top:371.69px;font-size:11px;color:#2a2a2a;transform:scaleX(0.8531);">D:\JESUS ACOSTA\500\ADMINISTRACION DE EMPRESAS\SNIP\8-Proyectos</div><div class="t" style="left:681px;top:327.69px;font-size:11px;color:#6d6d6d;transform:scaleX(0.8972);">Fecha de modificación:</div><div class="t" style="left:785px;top:327.69px;font-size:11px;color:#2a2a2a;transform:scaleX(0.8991);">07/09/2015 18:15</div><div class="t" style="left:681px;top:343.19px;font-size:11px;color:#6d6d6d;transform:scaleX(0.8815);">Tamaño:</div><div class="t" style="left:721.5px;top:343.19px;font-size:11px;color:#2a2a2a;transform:scaleX(0.8303);">96.5 KB</div><div class="t" style="left:681px;top:358.19px;font-size:11px;color:#6d6d6d;transform:scaleX(0.8787);">Autores:</div><div class="t" style="left:719.5px;top:358.19px;font-size:11px;color:#2a2a2a;transform:scaleX(0.8599);">lsuarez</div><div class="t" style="left:181.7px;top:395.34px;font-size:12px;color:#262626;transform:scaleX(1.0055);">3-Reforma</div><div class="t" style="left:181px;top:440.69px;font-size:11px;color:#2a2a2a;transform:scaleX(0.8575);">D:\JESUS ACOSTA\500\ADMINISTRACION DE EMPRESAS\SNIP\7-Planes y Programas\Políticas</div><div class="t" style="left:681px;top:396.69px;font-size:11px;color:#6d6d6d;transform:scaleX(0.8972);">Fecha de modificación:</div><div class="t" style="left:785px;top:396.69px;font-size:11px;color:#2a2a2a;transform:scaleX(0.8991);">07/09/2015 18:15</div><div class="t" style="left:681px;top:412.19px;font-size:11px;color:#6d6d6d;transform:scaleX(0.8815);">Tamaño:</div><div class="t" style="left:721.5px;top:412.19px;font-size:11px;color:#2a2a2a;transform:scaleX(0.8173);">132 KB</div><div class="t" style="left:681px;top:427.19px;font-size:11px;color:#6d6d6d;transform:scaleX(0.8787);">Autores:</div><div class="t" style="left:719.5px;top:427.19px;font-size:11px;color:#2a2a2a;transform:scaleX(0.8383);">José Arca</div><div class="t" style="left:181.7px;top:464.34px;font-size:12px;color:#262626;transform:scaleX(0.9610);">Plan Estrategico Sectorial Inversion FV</div><div class="t" style="left:181px;top:480.69px;font-size:11px;color:#2a2a2a;transform:scaleX(0.8401);">D:\JESUS ACOSTA\500\ADMINISTRACION DE EMPR...</div><div class="t" style="left:431px;top:480.69px;font-size:11px;color:#6d6d6d;transform:scaleX(0.8600);">Tipo: </div><div class="t" style="left:455px;top:480.69px;font-size:11px;color:#2a2a2a;transform:scaleX(0.8719);">Archivo WinRAR ZIP</div><div class="t" style="left:681px;top:465.69px;font-size:11px;color:#6d6d6d;transform:scaleX(0.8972);">Fecha de modificación:</div><div class="t" style="left:785px;top:465.69px;font-size:11px;color:#2a2a2a;transform:scaleX(0.8991);">07/09/2015 18:15</div><div class="t" style="left:681px;top:481.19px;font-size:11px;color:#6d6d6d;transform:scaleX(0.8815);">Tamaño:</div><div class="t" style="left:721.5px;top:481.19px;font-size:11px;color:#2a2a2a;transform:scaleX(0.8173);">583 KB</div><div class="t" style="left:181.7px;top:504.34px;font-size:12px;color:#262626;transform:scaleX(0.9648);">Evaluación de Enero del Plan Táctico 2004 OCPD 09mar2004 (1)</div><div class="t" style="left:181px;top:549.69px;font-size:11px;color:#2a2a2a;transform:scaleX(0.8485);">D:\JESUS ACOSTA\500\ADMINISTRACION DE EMPRESAS\SNIP\7-Planes y Programas\Plan OCPD-GPEI</div><div class="t" style="left:681px;top:505.69px;font-size:11px;color:#6d6d6d;transform:scaleX(0.8972);">Fecha de modificación:</div><div class="t" style="left:785px;top:505.69px;font-size:11px;color:#2a2a2a;transform:scaleX(0.8991);">07/09/2015 18:15</div><div class="t" style="left:681px;top:521.19px;font-size:11px;color:#6d6d6d;transform:scaleX(0.8815);">Tamaño:</div><div class="t" style="left:721.5px;top:521.19px;font-size:11px;color:#2a2a2a;transform:scaleX(0.8048);">55.5 KB</div><div class="t" style="left:681px;top:536.19px;font-size:11px;color:#6d6d6d;transform:scaleX(0.8787);">Autores:</div><div class="t" style="left:719.5px;top:536.19px;font-size:11px;color:#2a2a2a;transform:scaleX(0.8174);">EsSalud</div><div class="t" style="left:181.7px;top:573.34px;font-size:12px;color:#262626;transform:scaleX(0.9580);">Formulación Mensual Plan Táctico 2004 OCPD - GPEI</div><div class="t" style="left:181px;top:618.69px;font-size:11px;color:#2a2a2a;transform:scaleX(0.8485);">D:\JESUS ACOSTA\500\ADMINISTRACION DE EMPRESAS\SNIP\7-Planes y Programas\Plan OCPD-GPEI</div><div class="t" style="left:681px;top:574.69px;font-size:11px;color:#6d6d6d;transform:scaleX(0.8972);">Fecha de modificación:</div><div class="t" style="left:785px;top:574.69px;font-size:11px;color:#2a2a2a;transform:scaleX(0.8991);">07/09/2015 18:15</div><div class="t" style="left:681px;top:590.19px;font-size:11px;color:#6d6d6d;transform:scaleX(0.8815);">Tamaño:</div><div class="t" style="left:721.5px;top:590.19px;font-size:11px;color:#2a2a2a;transform:scaleX(0.8048);">56.0 KB</div><div class="t" style="left:681px;top:605.19px;font-size:11px;color:#6d6d6d;transform:scaleX(0.8787);">Autores:</div><div class="t" style="left:719.5px;top:605.19px;font-size:11px;color:#2a2a2a;transform:scaleX(0.8174);">EsSalud</div><div class="t" style="left:181.7px;top:642.34px;font-size:12px;color:#262626;transform:scaleX(0.9413);">PlanTcticoOCPD2004-GPEI</div><div class="t" style="left:681px;top:643.69px;font-size:11px;color:#6d6d6d;transform:scaleX(0.8972);">Fecha de modificación:</div><div class="t" style="left:785px;top:643.69px;font-size:11px;color:#2a2a2a;transform:scaleX(0.8991);">07/09/2015 18:15</div><div class="t" style="left:681px;top:659.19px;font-size:11px;color:#6d6d6d;transform:scaleX(0.8815);">Tamaño:</div><div class="t" style="left:721.5px;top:659.19px;font-size:11px;color:#2a2a2a;transform:scaleX(0.8048);">32.0 KB</div><div class="t" style="left:681px;top:674.19px;font-size:11px;color:#6d6d6d;transform:scaleX(0.8787);">Autores:</div><div class="t" style="left:719.5px;top:674.19px;font-size:11px;color:#2a2a2a;transform:scaleX(0.8174);">EsSalud</div><div class="t" style="left:12px;top:688.96px;font-size:9.5px;color:#333;transform:scaleX(1.0342);">15 elementos</div></body></html>
